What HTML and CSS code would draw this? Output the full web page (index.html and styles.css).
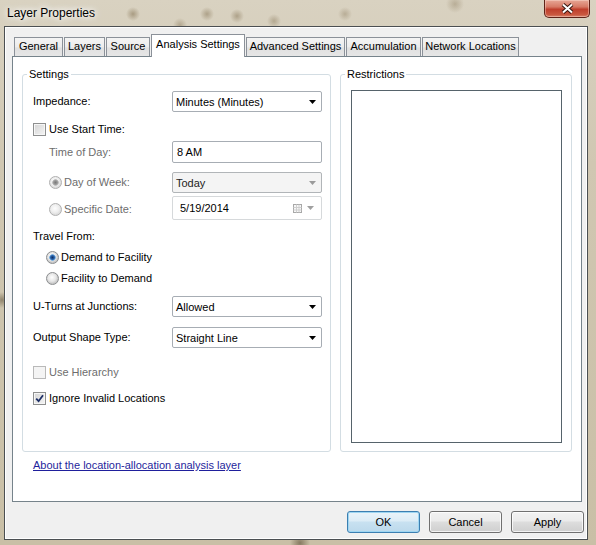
FILE: index.html
```html
<!DOCTYPE html>
<html>
<head>
<meta charset="utf-8">
<link rel="stylesheet" href="styles.css">
</head>
<body>
<div class="titlebar">
  <span class="title">Layer Properties</span>
  <div class="close">
    <svg width="13" height="11" viewBox="0 0 13 11"><path d="M2 1.5L11 9.5M11 1.5L2 9.5" stroke="#3a1710" stroke-width="4" fill="none"/><path d="M2 1.5L11 9.5M11 1.5L2 9.5" stroke="#fff" stroke-width="2" fill="none"/></svg>
  </div>
</div>
<div class="client">
  <div class="tabs">
    <div class="tab">General</div>
    <div class="tab">Layers</div>
    <div class="tab">Source</div>
    <div class="tab active">Analysis Settings</div>
    <div class="tab">Advanced Settings</div>
    <div class="tab">Accumulation</div>
    <div class="tab">Network Locations</div>
  </div>
  <div class="panel">
    <div class="groups">
      <div class="group settings">
        <span class="legend">Settings</span>
        <div class="row h21">
          <div class="lbl">Impedance:</div>
          <div class="combo"><span>Minutes (Minutes)</span><svg width="7" height="4" viewBox="0 0 7 4"><path d="M0 0h7L3.5 4z" fill="#000"/></svg></div>
        </div>
        <div class="row h13 mt11">
          <div class="lbl"><span class="check"></span><span class="gap3">Use Start Time:</span></div>
        </div>
        <div class="row h22 mt5">
          <div class="lbl indent16 dis">Time of Day:</div>
          <div class="textbox">8 AM</div>
        </div>
        <div class="row h21 mt9">
          <div class="lbl indent16 dis"><span class="radio on disabled"></span><span class="gap2">Day of Week:</span></div>
          <div class="combo disabled"><span>Today</span><svg width="7" height="4" viewBox="0 0 7 4"><path d="M0 0h7L3.5 4z" fill="#9a9a9a"/></svg></div>
        </div>
        <div class="row h24 mt3">
          <div class="lbl indent16 dis lower2"><span class="radio disabled"></span><span class="gap2">Specific Date:</span></div>
          <div class="datebox"><span>5/19/2014</span>
            <span class="dateicons">
              <svg width="9" height="9" viewBox="0 0 9 9"><rect x=".5" y=".5" width="8" height="8" fill="#f7f7f7" stroke="#a8a8a8"/><path d="M.5 3.5h8M.5 6h8M3.5 .5v8M6 .5v8" stroke="#cfcfcf"/></svg>
              <svg width="7" height="4" viewBox="0 0 7 4"><path d="M0 0h7L3.5 4z" fill="#a0a0a0"/></svg>
            </span>
          </div>
        </div>
        <div class="row h13 mt10">
          <div class="lbl">Travel From:</div>
        </div>
        <div class="row h13 mt8">
          <div class="lbl indent13"><span class="radio on"></span><span class="gap2">Demand to Facility</span></div>
        </div>
        <div class="row h13 mt8">
          <div class="lbl indent13"><span class="radio"></span><span class="gap2">Facility to Demand</span></div>
        </div>
        <div class="row h21 mt11">
          <div class="lbl">U-Turns at Junctions:</div>
          <div class="combo"><span>Allowed</span><svg width="7" height="4" viewBox="0 0 7 4"><path d="M0 0h7L3.5 4z" fill="#000"/></svg></div>
        </div>
        <div class="row h21 mt10">
          <div class="lbl">Output Shape Type:</div>
          <div class="combo"><span>Straight Line</span><svg width="7" height="4" viewBox="0 0 7 4"><path d="M0 0h7L3.5 4z" fill="#000"/></svg></div>
        </div>
        <div class="row h13 mt18">
          <div class="lbl dis"><span class="check disabled"></span><span class="gap3">Use Hierarchy</span></div>
        </div>
        <div class="row h13 mt13">
          <div class="lbl wide"><span class="check"><svg width="9" height="9" viewBox="0 0 9 9"><path d="M1.2 4.6L3.6 7.2L8 1.2" stroke="#1d2f66" stroke-width="1.8" fill="none"/></svg></span><span class="gap3">Ignore Invalid Locations</span></div>
        </div>
      </div>
      <div class="group restrictions">
        <span class="legend">Restrictions</span>
        <div class="listbox"></div>
      </div>
    </div>
    <a class="link" href="#">About the location-allocation analysis layer</a>
  </div>
  <div class="buttons">
    <div class="btn default">OK</div>
    <div class="btn">Cancel</div>
    <div class="btn">Apply</div>
  </div>
</div>
</body>
</html>
```
FILE: styles.css
```css
* { box-sizing: border-box; }
html, body { margin: 0; padding: 0; }
body {
  width: 596px;
  height: 545px;
  overflow: hidden;
  font-family: "Liberation Sans", Arial, sans-serif;
  font-size: 11px;
  color: #000;
  background:
    radial-gradient(circle at 133px 14px, rgba(110,90,55,.45) 0, rgba(110,90,55,0) 7px),
    radial-gradient(circle at 207px 14px, rgba(110,90,55,.4) 0, rgba(110,90,55,0) 7px),
    radial-gradient(circle at 237px 16px, rgba(110,90,55,.4) 0, rgba(110,90,55,0) 7px),
    radial-gradient(circle at 180px 25px, rgba(110,90,55,.35) 0, rgba(110,90,55,0) 7px),
    radial-gradient(circle at 274px 21px, rgba(110,90,55,.35) 0, rgba(110,90,55,0) 7px),
    radial-gradient(circle at 345px 14px, rgba(110,90,55,.3) 0, rgba(110,90,55,0) 7px),
    radial-gradient(circle at 455px 4px, rgba(110,90,55,.3) 0, rgba(110,90,55,0) 9px),
    radial-gradient(circle at 300px 543px, rgba(70,55,30,.5) 0, rgba(70,55,30,0) 10px),
    radial-gradient(circle at 2px 300px, rgba(70,55,30,.45) 0, rgba(70,55,30,0) 8px),
    linear-gradient(#d9d2c1, #d0c7b2 30%, #c9bfa6);
}

.titlebar {
  height: 26px;
  display: flex;
  justify-content: space-between;
  align-items: flex-start;
}
.title {
  font-size: 12px;
  line-height: 16px;
  margin: 5px 0 0 7px;
  color: #000;
  text-shadow: 0 0 5px #fff, 0 0 9px rgba(255,255,255,.9), 0 0 12px rgba(255,255,255,.7);
}
.close {
  width: 46px;
  height: 18px;
  margin-right: 6px;
  border: 1px solid #5e2318;
  border-top: none;
  border-radius: 0 0 5px 5px;
  background: linear-gradient(#e7a796, #d77a66 40%, #bf3f2c 55%, #c9573f 85%, #d8826a);
  box-shadow: inset 0 0 0 1px rgba(255,230,220,.4);
  display: flex;
  align-items: center;
  justify-content: center;
  padding-bottom: 1px;
}

.client {
  margin-left: 4px;
  width: 584px;
  height: 514px;
  border: 1px solid #4b4f52;
  box-shadow: inset 0 0 0 1px #fff;
  background: #f0f0f0;
  padding: 7px 4px 0 7px;
}

.tabs {
  height: 22px;
  display: flex;
  align-items: flex-end;
  padding-left: 2px;
  position: relative;
  z-index: 2;
}
.tab {
  height: 19px;
  line-height: 17px;
  margin-right: 1px;
  border: 1px solid #8b9199;
  border-bottom: none;
  background: linear-gradient(#f4f4f4, #ececec 50%, #e0e0e0 55%, #e6e6e6);
  text-align: center;
  white-space: nowrap;
}
.tab:nth-child(1) { width: 49px; }
.tab:nth-child(2) { width: 41px; }
.tab:nth-child(3) { width: 44px; }
.tab:nth-child(4) { width: 94px; }
.tab:nth-child(5) { width: 99px; }
.tab:nth-child(6) { width: 75px; }
.tab:nth-child(7) { width: 97px; }
.tab.active {
  height: 23px;
  line-height: 18px;
  margin-bottom: -1px;
  background: #fff;
}

.panel {
  width: 570px;
  height: 446px;
  border: 1px solid #76838b;
  background: #fff;
  padding: 17px 9px 0 9px;
  position: relative;
  z-index: 1;
}
.groups {
  display: flex;
  gap: 9px;
}
.group {
  position: relative;
  height: 378px;
  border: 1px solid #d3dde3;
  border-radius: 3px;
}
.settings {
  width: 309px;
  padding: 16px 8px 0 10px;
  display: flex;
  flex-direction: column;
}
.restrictions {
  width: 232px;
  padding: 15px 9px 8px 10px;
  display: flex;
  flex-direction: column;
}
.legend {
  position: absolute;
  top: -7px;
  left: 4px;
  padding: 0 2px;
  line-height: 13px;
  background: #fff;
}
.listbox {
  flex: 1;
  border: 1px solid #56636b;
  background: #fff;
}

.row {
  display: flex;
  align-items: center;
  flex: none;
}
.h13 { height: 13px; }
.h21 { height: 21px; }
.h22 { height: 22px; }
.h24 { height: 24px; }
.mt3 { margin-top: 3px; }
.mt5 { margin-top: 5px; }
.mt8 { margin-top: 8px; }
.mt9 { margin-top: 9px; }
.mt10 { margin-top: 10px; }
.mt11 { margin-top: 11px; }
.mt12 { margin-top: 12px; }
.mt13 { margin-top: 13px; }
.mt18 { margin-top: 18px; }

.lbl {
  width: 139px;
  flex: none;
  display: flex;
  align-items: center;
  line-height: 13px;
  white-space: nowrap;
}
.lbl.wide { width: 200px; }
.lower2 { padding-top: 3px; }
.indent16 { padding-left: 16px; }
.indent13 { padding-left: 13px; }
.dis { color: #6d6d6d; }
.gap2 { margin-left: 2px; }
.gap3 { margin-left: 3px; }

.combo, .textbox, .datebox {
  width: 150px;
  height: 100%;
  border: 1px solid #a7adb4;
  border-radius: 2px;
  background: #fff;
  display: flex;
  align-items: center;
  white-space: nowrap;
}
.combo {
  justify-content: space-between;
  padding: 0 5px 0 3px;
}
.combo.disabled {
  background: #f4f4f4;
  border-color: #b1b5b8;
  color: #222;
}
.textbox {
  padding-left: 4px;
}
.datebox {
  border-color: #d6d9db;
  justify-content: space-between;
  padding: 0 7px 0 7px;
}
.dateicons {
  display: flex;
  align-items: center;
  gap: 5px;
}

.check {
  width: 13px;
  height: 13px;
  flex: none;
  border: 1px solid #8e8f8f;
  background: linear-gradient(135deg, #d4d4d4, #f5f5f5);
  box-shadow: inset 0 0 0 1px #f6f6f6;
  display: flex;
  align-items: center;
  justify-content: center;
}
.check.disabled {
  border-color: #b9b9b9;
  background: #f4f4f4;
  box-shadow: none;
}
.radio {
  width: 13px;
  height: 13px;
  flex: none;
  border-radius: 50%;
  border: 1px solid #8b8d8f;
  background: radial-gradient(circle at 45% 40%, #ffffff 0, #e6e6e6 4px, #c9c9c9 6px);
}
.radio.on {
  background:
    radial-gradient(circle at 50% 50%, #0f2f63 0, #2a63ab 2px, #7fb2e0 3px, rgba(127,178,224,0) 3.6px),
    radial-gradient(circle at 45% 40%, #ffffff 0, #e6e6e6 4px, #c9c9c9 6px);
}
.radio.disabled {
  border-color: #b0b0b0;
  background: radial-gradient(circle at 45% 40%, #fdfdfd 0, #eeeeee 4px, #dedede 6px);
}
.radio.on.disabled {
  background:
    radial-gradient(circle at 50% 50%, #7a7a7a 0, #9a9a9a 2px, #c0c0c0 3px, rgba(192,192,192,0) 3.6px),
    radial-gradient(circle at 45% 40%, #fdfdfd 0, #eeeeee 4px, #dedede 6px);
}

.link {
  display: inline-block;
  margin: 7px 0 0 11px;
  line-height: 13px;
  color: #1f1f9c;
  text-decoration: underline;
}

.buttons {
  display: flex;
  justify-content: flex-end;
  gap: 9px;
  margin: 9px -1px 0 0;
}
.btn {
  width: 73px;
  height: 22px;
  border: 1px solid #707070;
  border-radius: 3px;
  background: linear-gradient(#f2f2f2, #ebebeb 45%, #dddddd 50%, #cfcfcf);
  box-shadow: inset 0 0 0 1px rgba(255,255,255,.75);
  display: flex;
  align-items: center;
  justify-content: center;
}
.btn.default {
  border-color: #3c7fb1;
  background: linear-gradient(#eaf4fa, #dcecf6 45%, #c8e1f1 50%, #bcd9ec);
  box-shadow: inset 0 0 0 1px #9fd6f2;
}
```
